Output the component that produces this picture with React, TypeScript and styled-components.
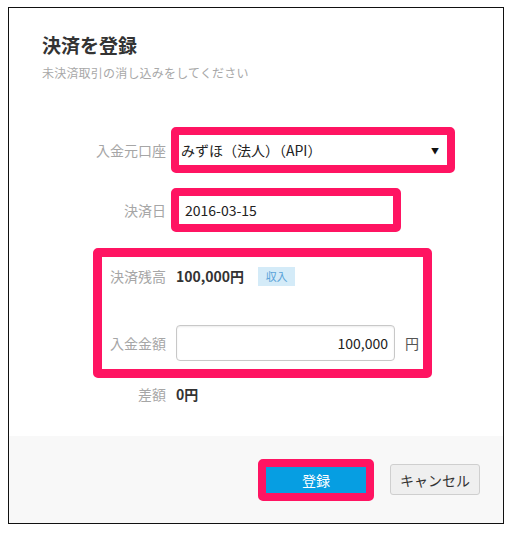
import React from 'react';
import styled, { createGlobalStyle } from 'styled-components';

const GlobalStyle = createGlobalStyle`
  body {
    margin: 0;
    background: #fff;
    font-family: "Noto Sans CJK JP", "Noto Sans", sans-serif;
    color: #333;
  }
`;

const Page = styled.div`
  padding: 7px 0 0 8px;
`;

const Modal = styled.div`
  width: 496px;
  height: 517px;
  box-sizing: border-box;
  border: 1px solid #111;
  background: #fff;
  display: flex;
  flex-direction: column;
`;

const Body = styled.div`
  flex: 1;
  padding: 24px 0 0 33px;
`;

const Title = styled.h2`
  margin: 0;
  font-size: 19px;
  line-height: 26px;
  font-weight: 700;
  color: #333;
`;

const Subtitle = styled.p`
  margin: 6px 0 0;
  font-size: 12px;
  line-height: 18px;
  letter-spacing: 0.2px;
  color: #a8a8a8;
`;

const Form = styled.div`
  margin: 45px 0 0 51px;
  display: flex;
  flex-direction: column;
  align-items: flex-start;
`;

// pink annotation frame round a control
const Highlight = styled.div<{ $w?: number; $gap?: number }>`
  border: ${p => p.$w ?? 8}px solid #ff1462;
  border-radius: 5px;
  margin-top: ${p => p.$gap ?? 0}px;
`;

const Row = styled.div<{ $pad?: boolean; $gap?: number; $h?: number }>`
  display: flex;
  align-items: center;
  padding-left: ${p => (p.$pad ? 9 : 0)}px;
  margin-top: ${p => p.$gap ?? 0}px;
  min-height: ${p => p.$h ?? 0}px;
`;

const Label = styled.div<{ $gap?: number }>`
  width: 64px;
  flex-shrink: 0;
  display: flex;
  justify-content: flex-end;
  white-space: nowrap;
  font-size: 14px;
  color: #a6a6a6;
  margin-right: ${p => p.$gap ?? 10}px;
`;

const SelectBox = styled.div`
  width: 268px;
  height: 30px;
  box-sizing: border-box;
  padding: 0 8px 0 2px;
  display: flex;
  align-items: center;
  justify-content: space-between;
  background: #fff;
  font-size: 14px;
  color: #222;
`;

const Caret = styled.span`
  font-size: 8px;
  color: #111;
`;

const DateBox = styled.div`
  width: 214px;
  height: 28px;
  box-sizing: border-box;
  padding-left: 6px;
  display: flex;
  align-items: center;
  font-size: 14px;
  color: #222;
`;

const BigBox = styled.div`
  padding: 9px 4px 8px 0;
  display: flex;
  flex-direction: column;
`;

const Value = styled.span`
  font-size: 14px;
  font-weight: 700;
  color: #333;
`;

const Badge = styled.span`
  margin-left: 14px;
  width: 37px;
  height: 19px;
  display: inline-flex;
  align-items: center;
  justify-content: center;
  background: #d4ebf8;
  color: #5aa3d8;
  font-size: 11px;
`;

const AmountInput = styled.div`
  width: 219px;
  height: 36px;
  box-sizing: border-box;
  border: 1px solid #c8c8c8;
  border-radius: 4px;
  box-shadow: inset 0 1px 2px rgba(0, 0, 0, 0.08);
  padding-right: 6px;
  display: flex;
  align-items: center;
  justify-content: flex-end;
  font-size: 14px;
  color: #222;
`;

const Unit = styled.span`
  margin-left: 10px;
  font-size: 14px;
  color: #555;
`;

const Footer = styled.div`
  height: 87px;
  background: #f8f8f8;
  display: flex;
  align-items: center;
  justify-content: flex-end;
  gap: 16px;
  padding-right: 23px;
`;

const PrimaryButton = styled.button`
  width: 100px;
  height: 26px;
  border: none;
  background: #069ee2;
  color: #fff;
  font-family: inherit;
  font-size: 14px;
  display: block;
`;

const CancelButton = styled.button`
  width: 90px;
  height: 31px;
  border: 1px solid #cfcfcf;
  border-radius: 3px;
  background: #efefef;
  color: #333;
  font-family: inherit;
  font-size: 14px;
`;

export default function App() {
  return (
    <Page>
      <GlobalStyle />
      <Modal>
        <Body>
          <Title>決済を登録</Title>
          <Subtitle>未決済取引の消し込みをしてください</Subtitle>
          <Form>
            <Row $pad>
              <Label $gap={5}>入金元口座</Label>
              <Highlight>
                <SelectBox>
                  <span>みずほ（法人）（API）</span>
                  <Caret>▼</Caret>
                </SelectBox>
              </Highlight>
            </Row>
            <Row $pad $gap={15}>
              <Label $gap={5}>決済日</Label>
              <Highlight>
                <DateBox>2016-03-15</DateBox>
              </Highlight>
            </Row>
            <Highlight $w={9} $gap={16}>
              <BigBox>
                <Row $h={20}>
                  <Label>決済残高</Label>
                  <Value>100,000円</Value>
                  <Badge>収入</Badge>
                </Row>
                <Row $gap={39}>
                  <Label>入金金額</Label>
                  <AmountInput>100,000</AmountInput>
                  <Unit>円</Unit>
                </Row>
              </BigBox>
            </Highlight>
            <Row $pad $gap={6} $h={20}>
              <Label>差額</Label>
              <Value>0円</Value>
            </Row>
          </Form>
        </Body>
        <Footer>
          <Highlight>
            <PrimaryButton>登録</PrimaryButton>
          </Highlight>
          <CancelButton>キャンセル</CancelButton>
        </Footer>
      </Modal>
    </Page>
  );
}
